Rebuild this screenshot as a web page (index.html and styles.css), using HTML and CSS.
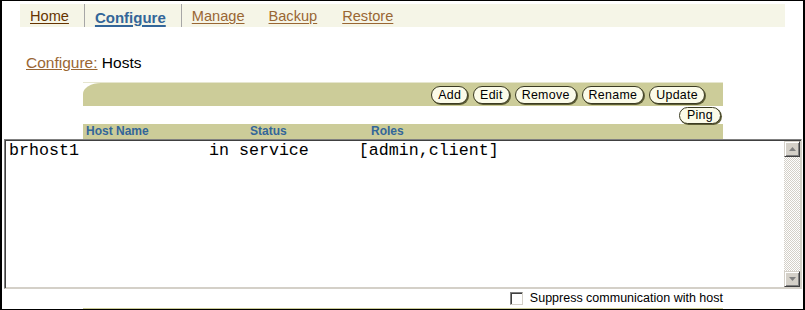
FILE: index.html
```html
<!DOCTYPE html>
<html>
<head>
<meta charset="utf-8">
<link rel="stylesheet" href="styles.css">
</head>
<body>
<div class="frame">
  <nav class="tabs">
    <a class="tab tab-home">Home</a>
    <span class="tab-sep sep-1"></span>
    <a class="tab tab-current">Configure</a>
    <span class="tab-sep sep-2"></span>
    <a class="tab tab-manage">Manage</a>
    <a class="tab tab-backup">Backup</a>
    <a class="tab tab-restore">Restore</a>
  </nav>

  <div class="crumb"><a class="crumb-link">Configure:</a> Hosts</div>

  <div class="panel">
    <div class="toolbar">
      <div class="toolbar-bar">
        <button class="btn">Add</button>
        <button class="btn">Edit</button>
        <button class="btn">Remove</button>
        <button class="btn">Rename</button>
        <button class="btn">Update</button>
      </div>
    </div>
    <div class="subbar">
      <button class="btn btn-small">Ping</button>
    </div>
    <div class="colheads">
      <span>Host Name</span>
      <span>Status</span>
      <span>Roles</span>
    </div>
  </div>

  <div class="listbox">
    <pre class="list-text">brhost1             in service     [admin,client]</pre>
    <div class="scrollbar">
      <div class="sb-btn">
        <svg width="7" height="4" viewBox="0 0 7 4"><polygon points="3.5,0 7,4 0,4" fill="#808080"/></svg>
      </div>
      <div class="sb-track"></div>
      <div class="sb-btn">
        <svg width="7" height="4" viewBox="0 0 7 4"><polygon points="0,0 7,0 3.5,4" fill="#808080"/></svg>
      </div>
    </div>
  </div>

  <div class="options">
    <span class="checkbox"></span>
    <span class="opt-label">Suppress communication with host</span>
  </div>
  <div class="footbar"></div>
</div>
</body>
</html>
```

FILE: styles.css
```css
* { box-sizing: border-box; }

html, body {
  margin: 0;
  padding: 0;
  background: #ffffff;
}

.frame {
  width: 805px;
  height: 310px;
  border-style: solid;
  border-color: #000;
  border-width: 1px 2px 1px 2px;
  overflow: hidden;
  font-family: "Liberation Sans", Arial, sans-serif;
  background: #fff;
}

/* ---------- tabs ---------- */
.tabs {
  display: flex;
  align-items: flex-start;
  height: 23px;
  margin: 3px 18px 0 18px;
  background: #f5f5e7;
}

.tab {
  font-size: 14.6px;
  line-height: 21px;
  padding-top: 2px;
  color: #996633;
  text-decoration: underline;
  text-underline-offset: 2px;
  cursor: pointer;
  white-space: nowrap;
}

.tab-home { margin-left: 10px; color: #663300; }
.tab-current {
  margin-left: 10px;
  font-size: 15px;
  font-weight: bold;
  color: #336699;
  padding-top: 3px;
  text-decoration-thickness: 2px;
  text-underline-offset: 2px;
}
.tab-manage { margin-left: 10px; }
.tab-backup { margin-left: 24px; }
.tab-restore { margin-left: 25px; }

.tab-sep {
  align-self: stretch;
  width: 1px;
  background: #a6a6a6;
}
.sep-1 { margin-left: 15px; }
.sep-2 { margin-left: 15px; }

/* ---------- breadcrumb ---------- */
.crumb {
  margin: 27px 0 0 24px;
  height: 17px;
  font-size: 15.5px;
  line-height: 17px;
  color: #000;
}
.crumb-link {
  color: #996633;
  text-decoration: underline;
  text-underline-offset: 1px;
}

/* ---------- panel ---------- */
.panel {
  margin: 11px 0 0 81px;
  width: 640px;
}

.toolbar {
  border-top: 1px solid #e6e6cf;
}

.toolbar-bar {
  height: 23px;
  background: #cccc99;
  border-top-left-radius: 18px 11px;
  display: flex;
  justify-content: flex-end;
  align-items: center;
  gap: 5px;
  padding: 0 18px 0 0;
}

.btn {
  font-family: "Liberation Sans", Arial, sans-serif;
  font-size: 12.4px;
  letter-spacing: 0.3px;
  line-height: 16px;
  height: 18px;
  padding: 0 6px;
  margin: 0;
  color: #000;
  background: #fbfbe9;
  border: 1px solid #3b3b22;
  border-radius: 9px;
  box-shadow: 1px 1px 0 #5e5e36;
  cursor: pointer;
}

.btn-small {
  height: 17px;
  line-height: 15px;
  padding: 0 7px;
}

.subbar {
  height: 18px;
  display: flex;
  justify-content: flex-end;
  align-items: center;
  padding-right: 2px;
}

.colheads {
  height: 15px;
  background: #cccc99;
  display: grid;
  grid-template-columns: 164px 121px 1fr;
  padding-left: 3px;
  font-size: 12px;
  font-weight: bold;
  line-height: 15px;
  color: #336699;
}

/* ---------- listbox ---------- */
.listbox {
  height: 150px;
  margin: 0 1px 0 2px;
  display: flex;
  border-style: solid;
  border-width: 1px;
  border-color: #808080 #d4d0c8 #d4d0c8 #808080;
  padding: 1px;
  box-shadow: inset 1px 1px 0 #404040, inset -1px -1px 0 #d4d0c8;
  background: #fff;
}

.list-text {
  flex: 1;
  margin: 0;
  padding: 0 0 0 3px;
  font-family: "Liberation Mono", "Courier New", monospace;
  font-size: 16.66px;
  line-height: 19px;
  color: #000;
}

.scrollbar {
  width: 16px;
  display: flex;
  flex-direction: column;
}

.sb-btn {
  height: 16px;
  background: #d4d0c8;
  border-style: solid;
  border-width: 1px;
  border-color: #d4d0c8 #404040 #404040 #d4d0c8;
  box-shadow: inset 1px 1px 0 #fff, inset -1px -1px 0 #808080;
  display: flex;
  align-items: center;
  justify-content: center;
}

.sb-track {
  flex: 1;
  background: repeating-conic-gradient(#d4d0c8 0 25%, #ffffff 0 50%) 0 0 / 2px 2px;
}

/* ---------- options ---------- */
.options {
  margin-left: 81px;
  width: 640px;
  height: 19px;
  display: flex;
  justify-content: flex-end;
  align-items: center;
  padding-right: 0;
}

.checkbox {
  width: 13px;
  height: 13px;
  background: #fff;
  border-style: solid;
  border-width: 1px;
  border-color: #808080 #d4d0c8 #d4d0c8 #808080;
  box-shadow: inset 1px 1px 0 #404040;
  margin-right: 7px;
}

.opt-label {
  font-size: 12.5px;
  line-height: 15px;
  color: #000;
}

.footbar {
  margin-left: 81px;
  width: 640px;
  height: 1px;
  background: #cccc99;
}
```
